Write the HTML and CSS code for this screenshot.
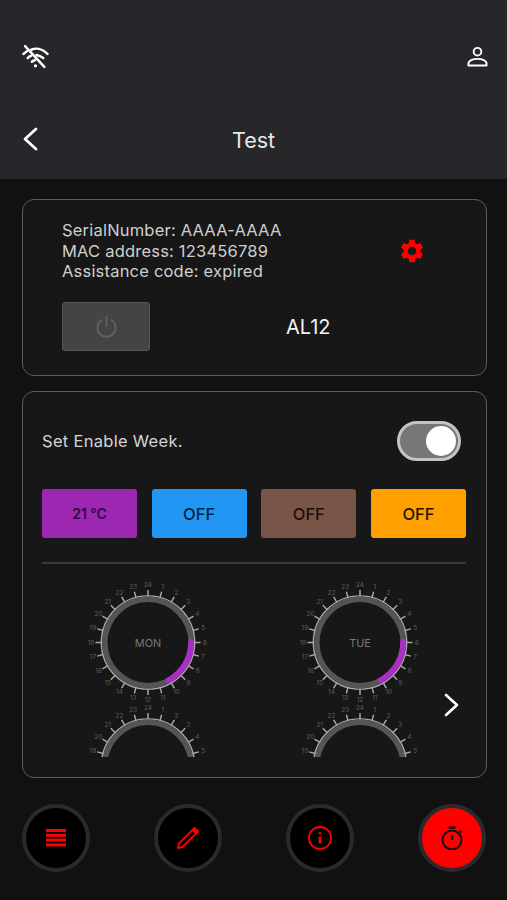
FILE: index.html
```html
<!DOCTYPE html>
<html lang="en">
<head>
    <meta charset="UTF-8">
    <meta name="viewport" content="width=device-width, initial-scale=1.0">
    <title>Test</title>
    <link rel="stylesheet" href="styles.css">
</head>
<body>

<!-- Header -->
<div class="header">
    <div class="status-row">
        <svg class="icon-wifi" viewBox="0 0 26 24" fill="none" stroke="#fff" stroke-width="2.4" stroke-linecap="round">
            <path d="M9 5.5C13 3.6 19 4 24.5 9.5"/>
            <path d="M1.5 9.5C2.5 8.4 3.6 7.6 4.8 6.9"/>
            <path d="M5.5 13.5C6.5 12.5 7.6 11.8 8.8 11.3"/>
            <path d="M14 10.5C16.5 11 18.5 12 20.5 13.5"/>
            <path d="M9.5 17C10.3 16.3 11.2 15.8 12.3 15.6"/>
            <path d="M3 2L21.5 22"/>
            <circle cx="13" cy="21" r="1.6" fill="#fff" stroke="none"/>
        </svg>
        <svg class="icon-user" viewBox="0 0 22 22" fill="none" stroke="#fff" stroke-width="2">
            <circle cx="11" cy="6" r="4"/>
            <path d="M1.5 20.5V18.5C1.5 15.5 6 13.5 11 13.5S20.500 15.5 20.5 18.5V20.5Z" stroke-linejoin="round"/>
        </svg>
    </div>
    <div class="title-row">
        <svg class="icon-back" viewBox="0 0 16 24" fill="none" stroke="#fff" stroke-width="2.8" stroke-linecap="round" stroke-linejoin="round">
            <path d="M14 2L3 12L14 22"/>
        </svg>
        <div class="title">Test</div>
    </div>
</div>

<div class="content">

    <!-- Device card -->
    <div class="card device-card">
        <div class="device-top">
            <div class="device-info">
                <div>SerialNumber: AAAA-AAAA</div>
                <div>MAC address: 123456789</div>
                <div>Assistance code: expired</div>
            </div>
            <svg class="icon-gear" viewBox="0 0 24 24" fill="#ff0000">
                <path d="M19.14 12.94c.04-.3.06-.61.06-.94 0-.32-.02-.64-.07-.94l2.03-1.58c.18-.14.23-.41.12-.61l-1.92-3.32c-.12-.22-.37-.29-.59-.22l-2.39.96c-.5-.38-1.03-.7-1.62-.94l-.36-2.54c-.04-.24-.24-.41-.48-.41h-3.84c-.24 0-.43.17-.47.41l-.36 2.54c-.59.24-1.13.57-1.62.94l-2.39-.96c-.22-.08-.47 0-.59.22L2.74 8.87c-.12.21-.08.47.12.61l2.03 1.58c-.05.3-.09.63-.09.94s.02.64.07.94l-2.03 1.58c-.18.14-.23.41-.12.61l1.92 3.32c.12.22.37.29.59.22l2.39-.96c.5.38 1.03.7 1.62.94l.36 2.54c.05.24.24.41.48.41h3.84c.24 0 .44-.17.47-.41l.36-2.54c.59-.24 1.13-.56 1.62-.94l2.39.96c.22.08.47 0 .59-.22l1.92-3.32c.12-.22.07-.47-.12-.61l-2.01-1.58zM12 15.6c-1.98 0-3.6-1.62-3.6-3.6s1.62-3.6 3.6-3.6 3.6 1.62 3.6 3.6-1.62 3.6-3.6 3.6z"/>
            </svg>
        </div>
        <div class="device-bottom">
            <div class="power-btn">
                <svg viewBox="0 0 24 24" fill="none" stroke="#606060" stroke-width="2" stroke-linecap="round">
                    <path d="M12 2V12"/>
                    <path d="M7 5.200A9.500 9.500 0 1 0 17 5.200"/>
                </svg>
            </div>
            <div class="device-name">AL12</div>
        </div>
    </div>

    <!-- Week card -->
    <div class="card week-card">
        <div class="enable-row">
            <div class="enable-label">Set Enable Week.</div>
            <div class="toggle"><div class="toggle-knob"></div></div>
        </div>
        <div class="mode-row">
            <div class="mode-btn mode-temp">21 °C</div>
            <div class="mode-btn mode-blue">OFF</div>
            <div class="mode-btn mode-brown">OFF</div>
            <div class="mode-btn mode-orange">OFF</div>
        </div>
        <div class="divider"></div>
        <div class="dial-area">
            <div class="dial-grid">
                <svg class="dial" data-day="MON" viewBox="0 0 124 124"></svg>
                <svg class="dial" data-day="TUE" viewBox="0 0 124 124"></svg>
                <svg class="dial" data-day="" viewBox="0 0 124 124"></svg>
                <svg class="dial" data-day="" viewBox="0 0 124 124"></svg>
            </div>
            <svg class="icon-next" viewBox="0 0 16 24" fill="none" stroke="#fff" stroke-width="2.6" stroke-linecap="round" stroke-linejoin="round">
                <path d="M3 2L14 12L3 22"/>
            </svg>
        </div>
    </div>

    <!-- Bottom buttons -->
    <div class="bottom-nav">
        <div class="round-btn">
            <svg viewBox="0 0 24 24" fill="#ff0000">
                <rect x="2" y="3" width="20" height="3"/>
                <rect x="2" y="7.800" width="20" height="3"/>
                <rect x="2" y="12.600" width="20" height="3"/>
                <rect x="2" y="17.400" width="20" height="3"/>
            </svg>
        </div>
        <div class="round-btn">
            <svg viewBox="0 0 24 24" fill="none" stroke="#ff0000" stroke-width="1.800" stroke-linejoin="round">
                <path d="M2 22L3 17.500L16.500 4L20 7.500L6.500 21Z"/>
                <path d="M18.500 1.800L22.200 5.500L21 6.700L17.300 3Z" fill="#ff0000"/>
            </svg>
        </div>
        <div class="round-btn">
            <svg viewBox="0 0 24 24" fill="none" stroke="#ff0000" stroke-width="1.800">
                <circle cx="12" cy="12" r="11"/>
                <circle cx="12" cy="7.300" r="1.400" fill="#ff0000" stroke="none"/>
                <path d="M12 10.500V17.500" stroke-width="2.600"/>
            </svg>
        </div>
        <div class="round-btn round-btn-active">
            <svg viewBox="0 0 24 24" fill="none" stroke="#111" stroke-width="2">
                <circle cx="12" cy="14" r="9.500"/>
                <path d="M8.500 1.500H15.500" stroke-width="2.400"/>
                <path d="M12 9V14" stroke-width="2.400"/>
                <path d="M19.500 4.500L21.500 6.500" stroke-width="2"/>
            </svg>
        </div>
    </div>
</div>

<script src="dials.js"></script>
</body>
</html>
```

FILE: styles.css
```css
body {
    font-family: "Inter", "Liberation Sans", sans-serif;
    background-color: #111112;
    margin: 0;
    padding: 0;
    color: #d8d8d8;
}

/* Header */
.header {
    background-color: #26262b;
    height: 179px;
    box-sizing: border-box;
    padding: 36px 22px 20px;
    display: flex;
    flex-direction: column;
    justify-content: space-between;
}
.status-row {
    height: 40px;
    display: flex;
    justify-content: space-between;
    align-items: center;
}
.icon-wifi {
    width: 27px;
    height: 25px;
}
.icon-user {
    width: 21px;
    height: 21px;
    margin-right: -3px;
    margin-top: 1px;
}
.title-row {
    height: 40px;
    position: relative;
    display: flex;
    align-items: center;
    justify-content: center;
}
.icon-back {
    position: absolute;
    left: 0;
    top: 8px;
    width: 16px;
    height: 24px;
}
.title {
    font-size: 21.5px;
    padding-top: 1px;
    color: #e8e8e8;
}

/* Cards */
.content {
    padding: 20px 20px 0 22px;
}
.card {
    border: 1.5px solid #5c5c5e;
    border-radius: 12px;
    background-color: #171718;
    box-sizing: border-box;
}
.device-card {
    height: 177px;
    padding: 20px 40px 0 39px;
    margin-bottom: 15px;
}
.device-top {
    display: flex;
    align-items: center;
    height: 62px;
}
.device-info {
    font-size: 16.5px;
    line-height: 20.7px;
    letter-spacing: 0.2px;
    width: 336px;
    color: #cfcfcf;
}
.icon-gear {
    width: 28px;
    height: 28px;
}
.device-bottom {
    display: flex;
    align-items: center;
    margin-top: 20px;
}
.power-btn {
    width: 88px;
    height: 49px;
    box-sizing: border-box;
    background-color: #444445;
    border: 1.5px solid #555;
    border-radius: 3px;
    display: flex;
    align-items: center;
    justify-content: center;
}
.power-btn svg {
    width: 23px;
    height: 23px;
}
.device-name {
    margin-left: 136px;
    font-size: 20px;
    color: #f2f2f2;
}

.week-card {
    height: 387px;
    padding: 29px 20px 20px 19px;
}
.enable-row {
    display: flex;
    justify-content: space-between;
    align-items: center;
    height: 40px;
    padding-right: 5px;
}
.enable-label {
    font-size: 16.500px;
    letter-spacing: 0.3px;
    color: #d4d4d4;
}
.toggle {
    width: 64px;
    height: 40px;
    box-sizing: border-box;
    border: 3px solid #c4c4c4;
    border-radius: 20px;
    background-color: #777;
    display: flex;
    align-items: center;
    justify-content: flex-end;
    padding-right: 2px;
}
.toggle-knob {
    width: 30px;
    height: 30px;
    border-radius: 50%;
    background-color: #fff;
}
.mode-row {
    display: flex;
    justify-content: space-between;
    margin-top: 28px;
}
.mode-btn {
    width: 95px;
    height: 49px;
    border-radius: 3px;
    display: flex;
    align-items: center;
    justify-content: center;
    font-size: 16.500px;
    font-weight: 500;
    color: #111;
}
.mode-temp {
    background-color: #9c27b0;
    font-size: 14px;
    font-weight: 600;
    color: #2d0a3c;
}
.mode-blue {
    background-color: #2196f3;
    color: #06233f;
}
.mode-brown {
    background-color: #795548;
    color: #1a0f0c;
}
.mode-orange {
    background-color: #ff9f00;
    color: #1e1400;
}
.divider {
    height: 2px;
    background-color: #3a3a3b;
    margin-top: 24px;
}

/* Dials */
.dial-area {
    position: relative;
    height: 193px;
    overflow: hidden;
}
.dial-grid {
    display: grid;
    grid-template-columns: 212px 212px;
    row-gap: 0;
    justify-items: center;
    padding-top: 17px;
}
.dial {
    width: 124px;
    height: 123px;
    display: block;
}
.icon-next {
    position: absolute;
    right: 7px;
    top: 129px;
    width: 16px;
    height: 24px;
}

/* Bottom buttons */
.bottom-nav {
    display: flex;
    justify-content: space-between;
    margin-top: 26px;
    padding-right: 1px;
}
.round-btn {
    width: 68px;
    height: 68px;
    box-sizing: border-box;
    border: 4px solid #2a2a2e;
    border-radius: 50%;
    background-color: #000;
    display: flex;
    align-items: center;
    justify-content: center;
}
.round-btn svg {
    width: 24px;
    height: 24px;
}
.round-btn-active {
    background-color: #ff0000;
}
```

FILE: dials.js
```js
// Build the 24 hour dials
var NS = 'http://www.w3.org/2000/svg';
var CX = 62;
var CY = 62;

function point(r, hour) {
    var a = hour * 15 * Math.PI / 180;
    return [CX + r * Math.sin(a), CY - r * Math.cos(a)];
}

function add(svg, tag, attrs, text) {
    var el = document.createElementNS(NS, tag);
    for (var k in attrs) {
        el.setAttribute(k, attrs[k]);
    }
    if (text !== undefined) {
        el.textContent = text;
    }
    svg.appendChild(el);
}

document.querySelectorAll('.dial').forEach(function(svg) {
    var day = svg.getAttribute('data-day');

    for (var h = 0; h < 24; h++) {
        var a = point(46, h);
        var b = point(53, h);
        add(svg, 'line', {x1: a[0], y1: a[1], x2: b[0], y2: b[1], stroke: '#a8a8a8', 'stroke-width': 1.5});

        // the second row is cut by the card, only its top half has labels
        if (!day && h > 5 && h < 19) {
            continue;
        }
        var t = point(57.5, h);
        add(svg, 'text', {
            x: t[0], y: t[1], 'font-size': 6.5, fill: '#5e5e5e',
            'text-anchor': 'middle', 'dominant-baseline': 'central'
        }, h === 0 ? '24' : String(h));
    }

    add(svg, 'circle', {cx: CX, cy: CY, r: 47, fill: 'none', stroke: '#a8a8a8', 'stroke-width': 1.5});
    add(svg, 'circle', {cx: CX, cy: CY, r: 43.5, fill: '#171718', stroke: '#555', 'stroke-width': 5.5});

    if (day) {
        var s = point(43.5, 5.95);
        var e = point(43.5, 10.1);
        add(svg, 'path', {
            d: 'M' + s[0] + ' ' + s[1] + 'A43.5 43.5 0 0 1 ' + e[0] + ' ' + e[1],
            fill: 'none', stroke: '#a82fc4', 'stroke-width': 6, 'stroke-linecap': 'round'
        });
        add(svg, 'text', {
            x: CX, y: CY, 'font-size': 11, fill: '#777',
            'text-anchor': 'middle', 'dominant-baseline': 'central'
        }, day);
    }
});
```
